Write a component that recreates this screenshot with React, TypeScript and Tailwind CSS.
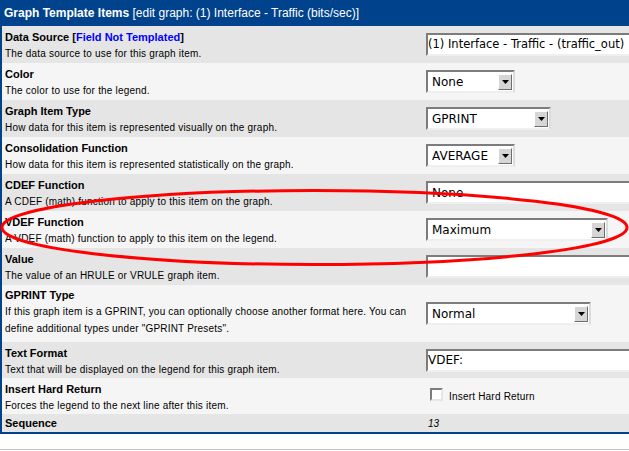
import React from "react";

const rows = [
  { label: "Color", desc: ["The color to use for the legend."], field: { kind: "select", value: "None", w: "w-[89px]" } },
  { label: "Graph Item Type", desc: ["How data for this item is represented visually on the graph."], field: { kind: "select", value: "GPRINT", w: "w-[125px]" } },
  { label: "Consolidation Function", desc: ["How data for this item is represented statistically on the graph."], field: { kind: "select", value: "AVERAGE", w: "w-[89px]" } },
  { label: "CDEF Function", desc: ["A CDEF (math) function to apply to this item on the graph."], field: { kind: "select", value: "None", w: "w-[260px]" } },
  { label: "VDEF Function", desc: ["A VDEF (math) function to apply to this item on the legend."], field: { kind: "select", value: "Maximum", w: "w-[182px]" } },
  { label: "Value", desc: ["The value of an HRULE or VRULE graph item."], field: { kind: "text", value: "", w: "w-[260px]" } },
  {
    label: "GPRINT Type",
    desc: [
      "If this graph item is a GPRINT, you can optionally choose another format here. You can",
      'define additional types under "GPRINT Presets".',
    ],
    field: { kind: "select", value: "Normal", w: "w-[165px]" },
  },
  { label: "Text Format", desc: ["Text that will be displayed on the legend for this graph item."], field: { kind: "text", value: "VDEF:", w: "w-[260px]" } },
];

function Arrow() {
  return (
    <div className="mr-[1px] flex h-[16px] w-[14px] shrink-0 items-center justify-center border border-t-white border-l-white border-r-[#6e6e6e] border-b-[#6e6e6e] bg-[#d6d6d6]">
      <svg width="7" height="4" viewBox="0 0 7 4">
        <path d="M0 0h7L3.5 4z" fill="#000" />
      </svg>
    </div>
  );
}

function Field({ kind, value, w }: { kind: string; value: string; w: string }) {
  const wide = w === "w-[260px]";
  return (
    <div
      className={`flex h-[23px] items-center border-2 border-t-[#7c7c7c] border-l-[#7c7c7c] border-r-[#dcdcdc] border-b-[#efefef] bg-white font-['DejaVu_Sans',sans-serif] text-[12px] text-black ${w}`}
    >
      <span className={`flex-1 truncate ${kind === "text" ? "pl-[0px]" : "pl-[4px]"}`}>{value}</span>
      {kind === "select" && !wide && <Arrow />}
    </div>
  );
}

function Row({ label, desc, bg, children, h }: { label: React.ReactNode; desc: string[]; bg: string; children: React.ReactNode; h: string }) {
  return (
    <div className={`flex ${bg} ${h}`}>
      <div className={`flex w-[424px] shrink-0 flex-col pl-[3px] ${desc.length > 1 ? "pt-[2px]" : "pt-[3px]"}`}>
        <div className="text-[11px] font-bold leading-[16px]">{label}</div>
        {desc.map((d) => (
          <div key={d} className="whitespace-nowrap text-[10px] leading-[17px] tracking-[0.2px]">
            {d}
          </div>
        ))}
      </div>
      <div className="flex items-center">{children}</div>
    </div>
  );
}

const heights = ["h-[37px]", "h-[37px]", "h-[37px]", "h-[37px]", "h-[37px]", "h-[37px]", "h-[57px]", "h-[36px]"];

export default function App() {
  return (
    <div className="relative h-[451px] w-[629px] overflow-hidden bg-white font-['Liberation_Sans',Arial,sans-serif] text-black">
      <div className="w-[700px] border-b-2 border-l-2 border-[#00438c]">
        <div className="flex h-[26px] items-center bg-[#00438c] pl-[2px] text-[12px] text-white">
          <span className="font-bold">Graph Template Items</span>
          <span>&nbsp;[edit graph: (1) Interface - Traffic (bits/sec)]</span>
        </div>

        <Row
          bg="bg-[#e5e5e5]"
          h="h-[37px]"
          label={
            <>
              Data Source [<span className="text-[#0000ff]">Field Not Templated</span>]
            </>
          }
          desc={["The data source to use for this graph item."]}
        >
          <div className="flex h-[23px] w-[260px] items-center border-2 border-t-[#7c7c7c] border-l-[#7c7c7c] border-r-[#dcdcdc] border-b-[#efefef] bg-white font-['DejaVu_Sans',sans-serif] text-[11.5px] whitespace-nowrap">
            (1) Interface - Traffic - (traffic_out)
          </div>
        </Row>

        {rows.map((r, i) => (
          <Row
            key={r.label}
            label={r.label}
            desc={r.desc}
            h={heights[i]}
            bg={i % 2 === 0 ? "bg-[#f5f5f5]" : "bg-[#e5e5e5]"}
          >
            <Field {...r.field} />
          </Row>
        ))}

        <Row bg="bg-[#f5f5f5]" h="h-[36px]" label="Insert Hard Return" desc={["Forces the legend to the next line after this item."]}>
          <label className="flex items-center pl-[4px]">
            <span className="mb-[3px] h-[13px] w-[13px] border-2 border-t-[#7c7c7c] border-l-[#7c7c7c] border-r-[#e6e6e6] border-b-[#e6e6e6] bg-white" />
            <span className="pl-[6px] text-[10px] tracking-[0.2px]">Insert Hard Return</span>
          </label>
        </Row>

        <div className="flex h-[18px] items-center bg-[#e5e5e5]">
          <div className="w-[424px] shrink-0 pl-[3px] text-[11px] font-bold">Sequence</div>
          <div className="pl-[2px] text-[10px] italic">13</div>
        </div>
      </div>

      <div className="mt-[15px] border-t border-[#c4c4c4]" />

      <svg className="pointer-events-none absolute left-0 top-0" width="629" height="451">
        <ellipse cx="314.5" cy="227.5" rx="312.5" ry="37" fill="none" stroke="#ff0000" strokeWidth="3" />
      </svg>
    </div>
  );
}
